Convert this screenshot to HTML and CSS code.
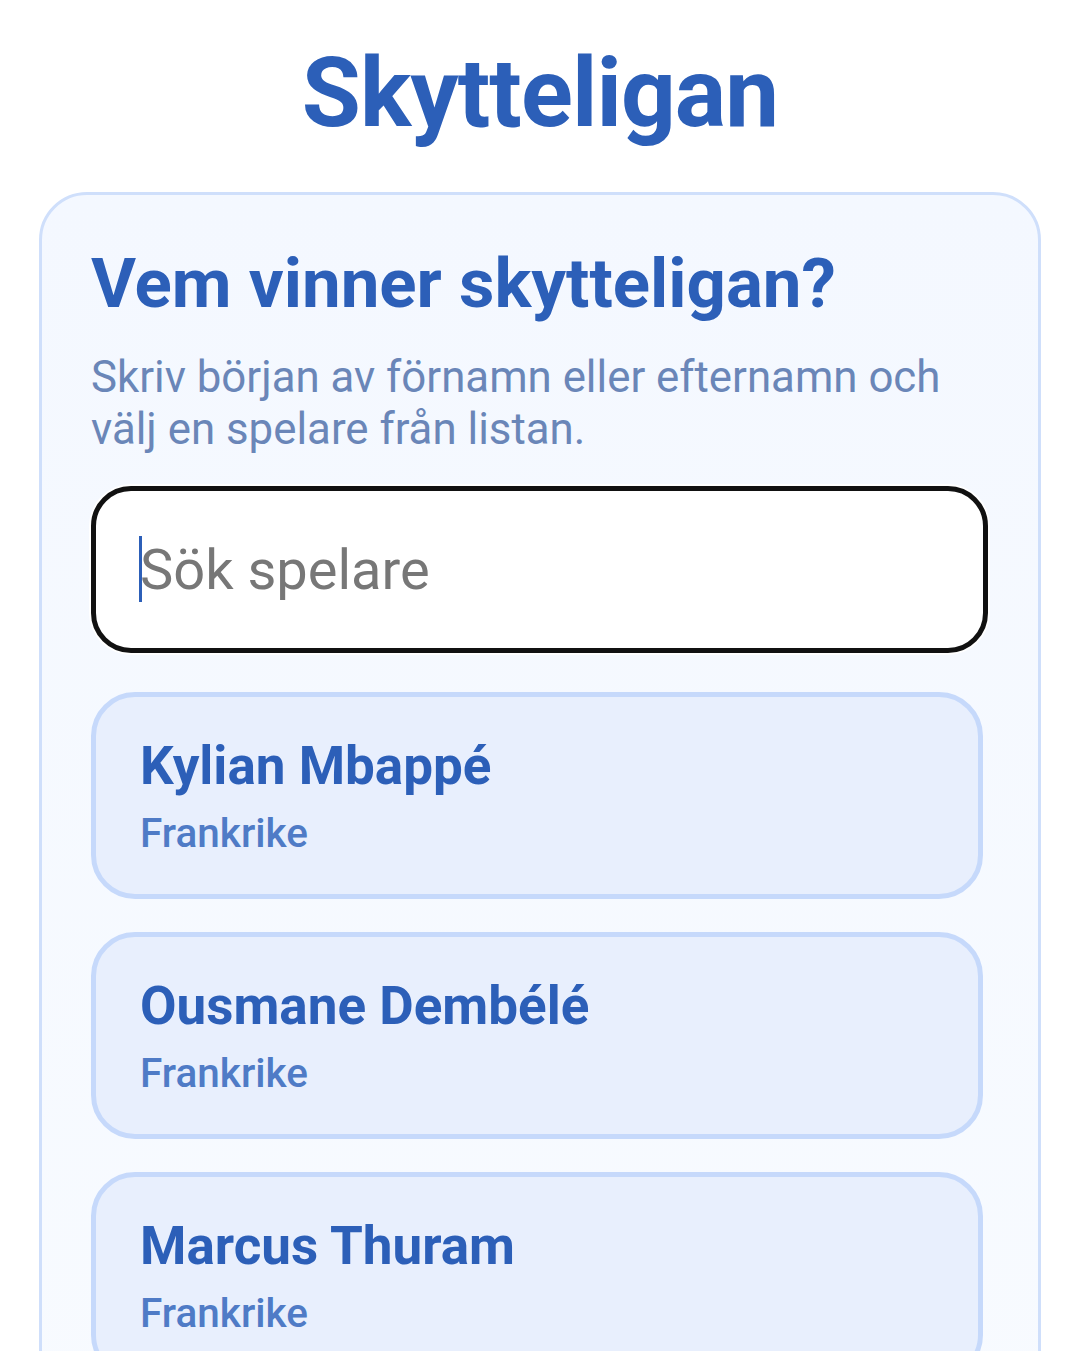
FILE: index.html
```html
<!DOCTYPE html>
<html lang="sv">
<head>
<meta charset="utf-8">
<title>Skytteligan</title>
<link rel="stylesheet" href="styles.css">
</head>
<body>
<main class="page">
  <h1 class="title">Skytteligan</h1>
  <section class="card">
    <h2 class="heading">Vem vinner skytteligan?</h2>
    <p class="lead">Skriv början av förnamn eller efternamn och välj en spelare från listan.</p>
    <div class="search">
      <input class="search-input" type="text" placeholder="Sök spelare">
      <span class="caret"></span>
    </div>
    <ul class="players">
      <li class="player">
        <div class="player-name">Kylian Mbappé</div>
        <div class="player-country">Frankrike</div>
      </li>
      <li class="player">
        <div class="player-name">Ousmane Dembélé</div>
        <div class="player-country">Frankrike</div>
      </li>
      <li class="player">
        <div class="player-name">Marcus Thuram</div>
        <div class="player-country">Frankrike</div>
      </li>
    </ul>
  </section>
</main>
</body>
</html>
```

FILE: styles.css
```css
html, body {
  margin: 0;
  padding: 0;
  background: #ffffff;
}
body {
  font-family: Roboto, "Noto Sans", "Liberation Sans", sans-serif;
  height: 1351px;
  overflow: hidden;
}
.page {
  padding: 36px 39px 0 39px;
}
.title {
  margin: 0 0 41px 0;
  text-align: center;
  font-size: 96px;
  line-height: 115px;
  font-weight: 700;
  color: #2c5fb8;
  letter-spacing: -0.9px;
}
.card {
  border: 3px solid #cfdffb;
  border-radius: 48px;
  background: linear-gradient(180deg, #f4f8ff 0%, #f8fbff 100%);
  padding: 47px 50px 60px 49px;
  min-height: 1300px;
}
.heading {
  margin: 0;
  font-size: 69px;
  line-height: 84px;
  font-weight: 700;
  color: #2c5fb8;
}
.lead {
  margin: 25px 0 0 0;
  font-size: 43.8px;
  line-height: 52px;
  color: #6a86b8;
}
.search {
  position: relative;
  margin-top: 31px;
}
.search-input {
  display: block;
  box-sizing: border-box;
  width: 100%;
  height: 167px;
  margin: 0;
  border: 5px solid #111111;
  border-radius: 40px;
  box-shadow: 0 0 0 2px #ffffff;
  background: #ffffff;
  padding: 0 40px 0 44px;
  font-family: inherit;
  font-size: 56px;
  color: #222;
  outline: none;
}
.search-input::placeholder {
  color: #777777;
}
.caret {
  position: absolute;
  left: 48px;
  top: 50px;
  width: 3px;
  height: 66px;
  background: #2c5fb8;
}
.players {
  list-style: none;
  margin: 39px 0 0 0;
  padding: 0 5px 0 0;
  display: flex;
  flex-direction: column;
  gap: 33px;
}
.player {
  border: 5px solid #c6d9fb;
  border-radius: 44px;
  background: #e8effd;
  padding: 37px 44px 37px 44px;
}
.player-name {
  font-size: 53px;
  line-height: 64px;
  font-weight: 700;
  color: #2c5fb8;
}
.player-country {
  margin-top: 11px;
  font-size: 40.5px;
  line-height: 48px;
  font-weight: 500;
  color: #4f7bc6;
}
```
